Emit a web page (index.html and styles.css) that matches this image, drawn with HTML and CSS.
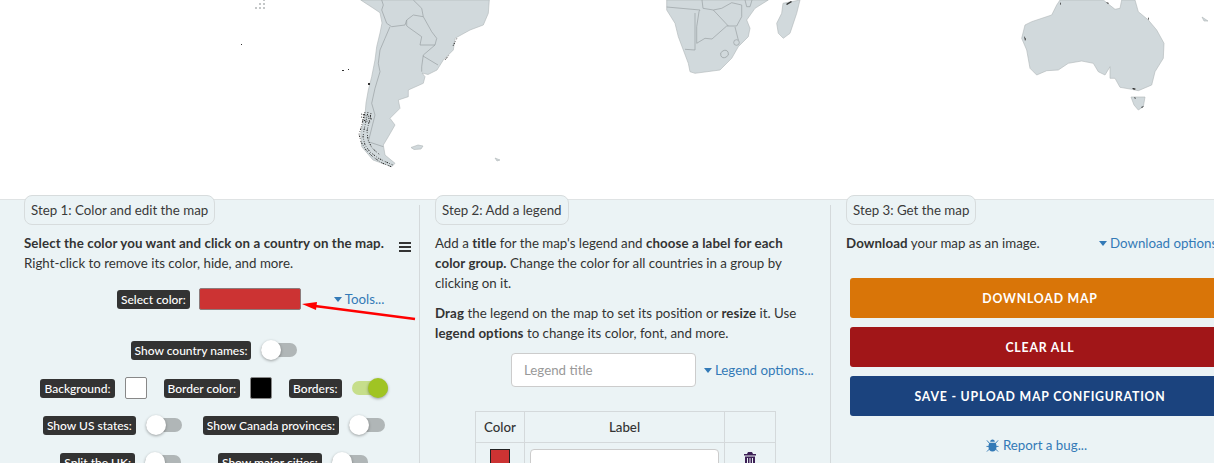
FILE: index.html
```html
<!DOCTYPE html>
<html lang="en">
<head>
<meta charset="utf-8">
<title>Map chart</title>
<link rel="stylesheet" href="styles.css">
</head>
<body>
<div class="page">
  <svg class="map" viewBox="0 0 1214 199" aria-label="World map">
    <g class="land">
      <path d="M360.7 0L373 8L380 12.7L382 23L380 33L376.7 46.7L375 60L371.7 76.7L368.3 90L366 103L365 115L360.7 133.3L361.7 146.7L373 160L391.700 166.700L395 163.300L385 155L383.300 145L388.300 136.700L395 125L390 118.300L400 108.300L398.300 100L408.300 96.700L408.300 90L423.300 83.300L425 76.700L422 73L428 74.500L437 70L443.300 60L453.300 50L455 38.300L470 30L483.300 25L488.300 13.300L489.300 0Z"/>
      <path d="M666.7 0L666.7 10L675 23.300L678.300 36.700L683.300 50L688.300 63.300L690 71.700L695 73.300L720 70L731.700 58.300L738.300 46.700L748.300 36.700L750 28.300L746.700 20L755 8.300L768.300 0Z"/>
      <path d="M783 3.300L800 0L796.700 13.300L790 33.300L783.300 38.300L778.300 33.300L776.700 23.300L781.700 13.300Z"/>
      <path d="M1056.700 5L1051.700 15L1031.700 21.700L1025 25L1021.700 38.300L1026.700 50L1030 68.300L1036.700 75L1046.700 70.700L1058.300 70L1068.300 63.300L1081.700 61L1093.300 63.300L1098.300 71.700L1105 75L1110 66.700L1110 78.300L1115 78.300L1120 87.300L1131.700 89.300L1138.300 90.700L1151.700 85L1155 71.700L1163.300 58.300L1164 43.300L1156.700 30L1148.300 20L1138.300 11.700L1135 0L1121.700 0L1120 8.300L1115 9.300L1103.300 0L1060 0Z"/>
      <path d="M1131 97L1145 97L1143.300 106.700L1138.300 110L1134 105Z"/>
      <path d="M411 147.500L418 145L423 146L421 149L414 149.500Z"/>
      <path d="M1202 17L1208 21L1204 21Z"/>
      <path d="M495 158L500 160L497 161Z"/>
    </g>
    <g class="borders">
      <path d="M381.700 0L383.300 5L381.700 10L386.700 23.300L391.700 26.700L405 25L406.700 20L413.300 15L423.300 16.700L421.700 8.300L413.300 0"/>
      <path d="M406.700 20L406.700 26L421.700 36.700L420 45L435 45L436.700 38.300L431.700 31.700L423.300 16.700"/>
      <path d="M435 45L423.300 55L421.700 66.700L421.700 71.700"/>
      <path d="M423 56L438 65"/>
      <path d="M390 26.700L385 38.300L380 50L378.300 63.300L380 71.700L375 88.300L371.700 103.300L375 115L368.300 141.700L383.300 146.700"/>
      <path d="M702 0L703 8.300L713.300 10L721.700 8.300L731.700 2.700L741.700 5L741.700 16.700L736.700 26L726.700 26L712 39L705 38.300L696.700 43.300L696.700 26.700L699 11.700L700 10L666.700 7"/>
      <path d="M695 13L695 50L685 49.300"/>
      <path d="M713.300 10L728.300 26"/>
      <path d="M735 27L738.300 40"/>
      <path d="M745 0L746.700 6.700L750 6.700L752 0"/>
      <ellipse cx="724.500" cy="54" rx="4" ry="3.500" transform="rotate(-25 724.500 54)"/>
      <circle cx="736.500" cy="42.500" r="2.800"/>
    </g>
    <g class="specks">
      <path d="M365 112L363 120L361 128L359 134L361 142L366 150L373 157L382 163L392 167"/>
      <path d="M368 112L366 121L364 130L363 137L365 145L370 152L378 158L386 162L393 165"/>
      <path d="M371 113L369 122L367 131L368 140L372 148L380 155"/>
      <path d="M361 114L371 117M361 117L372 119M362 120L371 122"/>
      <path d="M453 46L457 38M445 60L449 55"/>
    </g>
    <g class="tiny">
      <path d="M241 44h1v1h-1zM342 70h2v1h-2zM348 69h1v1h-1zM368 83h2v2h-2zM1061 2l-1 2 1 1zM1024 36l2 3-1 2zM1106 2l2 2 1-1zM1132 88l2 2 2-1-2-1zM1134 97l2 1-1 1zM1144 106l-2 2-1-1zM786 4l5-3 1 1-5 3zM1148 17l1 2-1 1z"/>
    </g>
    <g class="dots">
      <path d="M255 7h2v2h-2zM259 7h2v2h-2zM263 7h2v2h-2zM259 3h2v2h-2zM263 3h2v2h-2zM263 0h2v1h-2z"/>
    </g>
  </svg>

  <main class="steps">
    <section class="step step-one">
      <h2 class="tab">Step 1: Color and edit the map</h2>
      <div class="intro">
        <p class="copy"><b>Select the color you want and click on a country on the map.</b><br>Right-click to remove its color, hide, and more.</p>
        <svg class="menu" viewBox="0 0 12 10" aria-hidden="true"><path d="M0 0h12v2H0zM0 4h12v2H0zM0 8h12v2H0z"/></svg>
      </div>
      <div class="select-row">
        <span class="badge">Select color:</span>
        <span class="color-bar"></span>
        <a class="link tools"><i class="caret"></i>Tools...</a>
      </div>
      <div class="opt-row opt-names">
        <span class="badge">Show country names:</span><span class="toggle"></span>
      </div>
      <div class="opt-row opt-colors">
        <span class="pair"><span class="badge">Background:</span><span class="swatch swatch-white"></span></span>
        <span class="pair"><span class="badge">Border color:</span><span class="swatch swatch-black"></span></span>
        <span class="pair"><span class="badge">Borders:</span><span class="toggle toggle-on"></span></span>
      </div>
      <div class="opt-row opt-states">
        <span class="pair"><span class="badge">Show US states:</span><span class="toggle"></span></span>
        <span class="pair"><span class="badge">Show Canada provinces:</span><span class="toggle"></span></span>
      </div>
      <div class="opt-row opt-uk">
        <span class="pair"><span class="badge">Split the UK:</span><span class="toggle"></span></span>
        <span class="pair"><span class="badge">Show major cities:</span><span class="toggle"></span></span>
      </div>
      <svg class="arrow" viewBox="0 0 116 20" aria-hidden="true"><path d="M114 17L14 4" class="arrow-line"/><path d="M1 2L16 0L15 8Z" class="arrow-head"/></svg>
    </section>

    <section class="step step-two">
      <h2 class="tab">Step 2: Add a legend</h2>
      <p class="copy">Add a <b>title</b> for the map's legend and <b>choose a label for each color group.</b> Change the color for all countries in a group by clicking on it.</p>
      <p class="copy copy-gap"><b>Drag</b> the legend on the map to set its position or <b>resize</b> it. Use <b>legend options</b> to change its color, font, and more.</p>
      <div class="legend-row">
        <input class="field legend-title" type="text" placeholder="Legend title">
        <a class="link"><i class="caret"></i>Legend options...</a>
      </div>
      <table class="legend-table">
        <thead><tr><th class="c-color">Color</th><th class="c-label">Label</th><th class="c-del"></th></tr></thead>
        <tbody><tr>
          <td class="c-color"><span class="legend-swatch"></span></td>
          <td class="c-label"><input class="field label-input" type="text"></td>
          <td class="c-del"><svg class="trash" viewBox="0 0 12 14" aria-hidden="true"><path d="M4 0h4l1 2h3v1.500H0V2h3zM1 4.500h10V14H1zM3 6v6h1V6zM5.500 6v6h1V6zM8 6v6h1V6z" fill-rule="evenodd"/></svg></td>
        </tr></tbody>
      </table>
    </section>

    <section class="step step-three">
      <h2 class="tab">Step 3: Get the map</h2>
      <div class="dl-row">
        <p class="copy"><b>Download</b> your map as an image.</p>
        <a class="link dl-link"><i class="caret"></i>Download options...</a>
      </div>
      <div class="buttons">
        <button class="btn btn-orange">DOWNLOAD MAP</button>
        <button class="btn btn-red">CLEAR ALL</button>
        <button class="btn btn-blue">SAVE - UPLOAD MAP CONFIGURATION</button>
      </div>
      <a class="link bug"><svg class="bug-icon" viewBox="0 0 14 14" aria-hidden="true"><path d="M4.500 3C4.500 1.500 5.500.5 7 .5S9.500 1.500 9.500 3zM3.800 4h6.400c.8 1 1.100 2.500 1.100 4.500 0 3-1.600 5-4.300 5s-4.300-2-4.300-5c0-2 .3-3.500 1.100-4.500z"/><path class="bug-legs" d="M1 1.500l3 3.500M13 1.500L10 5M.5 8h3M13.500 8h-3M1 13.500l3-3M13 13.500l-3-3"/></svg>Report a bug...</a>
    </section>
  </main>
</div>
</body>
</html>
```
FILE: styles.css
```css
* { box-sizing: border-box; }
html, body { margin: 0; height: 463px; overflow: hidden; background: #fff; }
body { font-family: Lato, "Noto Sans", sans-serif; font-size: 13.3px; line-height: 20px; color: #333; }
.page { width: 1232px; }
.map { display: block; width: 1214px; height: 199px; }
.land path { fill: #d1d9dc; stroke: #aeb5b7; stroke-width: .6; }
.borders { fill: none; stroke: #9aa1a3; stroke-width: .7; }
.specks { fill: none; stroke: #222; stroke-width: 1; stroke-dasharray: .8 1.1 1.6 1.4 .6 2; }
.tiny { fill: #333; }
.dots { fill: #c4c7c8; }

.steps { display: grid; grid-template-columns: 420px 411px 401px; background: #ebf3f5; border-top: 1px solid #dfe3e4; height: 264px; }
.step { position: relative; padding: 0 9px 0 24px; min-width: 0; }
.step-one::after, .step-two::after { content: ""; position: absolute; top: 5px; right: 0; bottom: 0; width: 1px; background: #d4d9db; }
.step-two { padding: 0 15px 0 15px; }
.step-three { padding: 0 0 0 15px; }
.tab { display: inline-block; height: 30px; margin: -5px 0 0; padding: 0 6px; border: 1px solid #d7dcdd; border-radius: 8px; background: #ebf3f5; font-size: 13.3px; font-weight: 400; line-height: 28px; color: #3a3a3a; white-space: nowrap; position: relative; z-index: 1; }
.copy { margin: 8px 0 0; }
.copy b { font-weight: 700; letter-spacing: .1px; }
.copy-gap { margin-top: 10px; }
.intro { display: flex; align-items: flex-start; justify-content: space-between; }
.menu { width: 12px; height: 10px; margin: 17px 0 0 0; fill: #333; flex: none; }

.badge { display: inline-block; height: 19px; padding: 0 4px; background: #333; border-radius: 3px; color: #fff; font-size: 12px; font-weight: 500; line-height: 19px; white-space: nowrap; }
.select-row { display: flex; align-items: center; margin: 15px 0 0 93px; height: 22px; }
.color-bar { width: 102px; height: 22px; margin-left: 9px; background: #cc3333; border: 1px solid #8d7b7b; border-radius: 2px; }
.link { color: #337ab7; white-space: nowrap; }
.tools { margin-left: 33px; }
.caret { display: inline-block; width: 0; height: 0; margin: 0 3px 2px 0; border: 4px solid transparent; border-top: 5px solid #337ab7; border-bottom: 0; }

.opt-row { display: flex; justify-content: center; align-items: center; width: 428px; margin-left: -24px; }
.pair { display: flex; align-items: center; gap: 10px; }
.opt-names { margin-top: 30px; gap: 10px; height: 20px; }
.opt-colors { margin-top: 17px; gap: 17px; height: 22px; }
.opt-states { margin-top: 16px; gap: 21px; height: 20px; }
.opt-uk { margin-top: 17px; gap: 37px; height: 20px; }
.swatch { display: block; width: 22px; height: 22px; border: 1px solid #888; border-radius: 2px; }
.swatch-white { background: #fff; }
.swatch-black { background: #000; }
.toggle { position: relative; display: block; width: 36px; height: 14px; border-radius: 7px; background: #b0b6b7; flex: none; }
.toggle::after { content: ""; position: absolute; left: 0; top: -3px; width: 20px; height: 20px; border-radius: 50%; background: #fff; box-shadow: 0 1px 3px rgba(0,0,0,.35); }
.toggle-on { background: #c6de8b; }
.toggle-on::after { left: 16px; background: #a0c423; }
.arrow { position: absolute; left: 301px; top: 102px; width: 116px; height: 20px; }
.arrow-line { stroke: #f00; stroke-width: 2.5; fill: none; }
.arrow-head { fill: #f00; }

.legend-row { display: flex; align-items: center; margin: 10px 0 0 76px; gap: 8px; }
.field { border: 1px solid #ccc; border-radius: 4px; background: #fff; font: inherit; outline: none; }
.legend-title { width: 185px; height: 34px; padding: 0 12px; }
.legend-title::placeholder { color: #999; opacity: 1; }
.legend-table { margin: 24px 0 0 40px; width: 300px; border-collapse: collapse; table-layout: fixed; }
.legend-table th, .legend-table td { border: 1px solid #d4d9db; padding: 0; text-align: center; vertical-align: top; }
.legend-table th { height: 31px; font-weight: 500; vertical-align: middle; }
.c-color { width: 49px; }
.c-label { width: 200px; }
.c-del { width: 51px; }
.legend-table td { height: 40px; }
.legend-swatch { display: block; width: 20px; height: 20px; margin: 6px auto 0; background: #cc3333; border: 1px solid #222; }
.label-input { display: block; width: 189px; height: 34px; margin: 6px auto 0 5px; }
.trash { width: 12px; height: 14px; margin-top: 9px; fill: #3c1f55; }

.dl-row { display: flex; justify-content: space-between; }
.dl-link { display: block; margin-top: 8px; position: absolute; left: 268px; }
.buttons { display: flex; flex-direction: column; gap: 9px; margin: 25px 0 0 4px; }
.btn { width: 380px; height: 40px; border: 0; border-radius: 3px; color: #fff; font: 700 12.3px Lato, sans-serif; letter-spacing: .8px; }
.btn-orange { background: #d97508; }
.btn-red { background: #a11618; }
.btn-blue { background: #1b437e; }
.bug { display: flex; align-items: center; justify-content: center; gap: 4px; width: 381px; margin-top: 19px; }
.bug-icon { width: 13px; height: 13px; fill: #337ab7; }
.bug-legs { fill: none; stroke: #337ab7; stroke-width: 1; }
```
